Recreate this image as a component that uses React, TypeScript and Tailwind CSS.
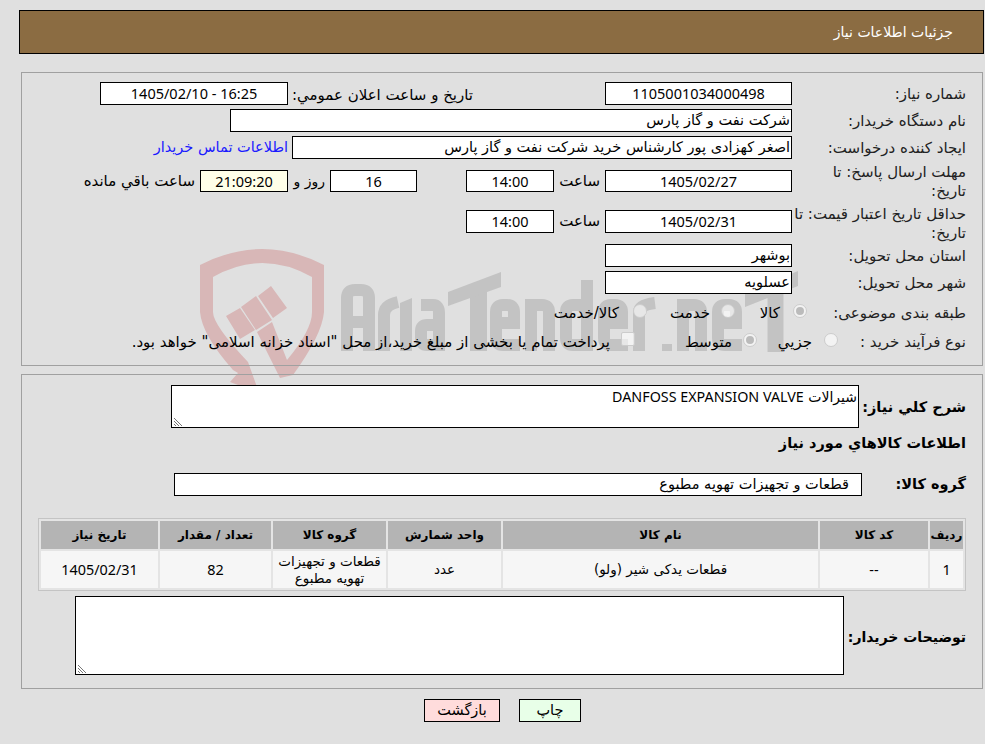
const latin = "font-['Noto_Sans'] text-[14.4px]";

const Box = ({ className = '', children }: { className?: string; children?: React.ReactNode }) => (
    <div className={`h-[23px] shrink-0 border border-black bg-white flex items-center justify-center text-[14.5px] leading-none ${className}`}>{children}</div>
);

const Label = ({ className = '', children }: { className?: string; children: React.ReactNode }) => (
    <div className={`w-[190px] shrink-0 pr-[16px] text-[15px] leading-[19px] text-[#222] ${className}`}>{children}</div>
);

const Radio = ({ checked = false }: { checked?: boolean }) => (
    <span className="w-[14px] h-[14px] mb-[5px] rounded-full border border-[#ccc] bg-white/60 flex items-center justify-center shrink-0">
        {checked && <span className="w-[8px] h-[8px] rounded-full bg-[#bbb]" />}
    </span>
);

function Grip() {
    return (
        <svg className="absolute left-[1px] bottom-[1px]" width="10" height="10" viewBox="0 0 10 10" stroke="#777" strokeWidth="1">
            <path d="M1 2 L9 10 M1 5 L6 10 M1 8 L3 10" />
        </svg>
    );
}

// site watermark, sits behind the form
function Watermark() {
    return (
        <svg className="absolute left-0 top-0" width="985" height="744" viewBox="0 0 985 744">
            <g fill="#d8b7b7">
                <path d="M238 373 L230 382 L257 392 L257 387 L248 362 Q213 325 213 312 V277 Q262 249 312 277 V312 Q312 330 287 360 L272 322 L257 332 L280 378 L293 375 Q322 335 324 312 V265 Q262 233 200 265 V312 Q202 335 233 370 Z" />
                <path d="M226 316 L240 308 L255 330 L240 339 Z M241 307 L256 296 L272 320 L256 330 Z M258 296 L271 286 L287 308 L273 318 Z" />
            </g>
            <g fill="none" stroke="#c3c3c3" strokeWidth="12">
                <path d="M347 351 V298 Q347 290 355 290 H361 Q369 290 369 298 V351 M347 322 H369" />
                <path d="M384 351 V315 Q384 305 398 302" />
                <path d="M406 351 V309" />
                <path d="M421 305 H433 Q439 305 439 313 V345 H427 Q421 345 421 338 V331 Q421 325 427 325 H439" />
                <path d="M478.5 290 V351" strokeWidth="17" />
                <path d="M496 323 H514 V312 Q514 305 507 305 H503 Q496 305 496 312 V338 Q496 345 503 345 H520" />
                <path d="M531 351 V305 H542 Q549 305 549 312 V351" />
                <path d="M587 280 V345 H573 Q566 345 566 338 V312 Q566 305 573 305 H587" />
                <path d="M604 323 H622 V312 Q622 305 615 305 H611 Q604 305 604 312 V338 Q604 345 611 345 H628" />
                <path d="M639 351 V312 Q639 305 655 303" />
                <path d="M683 351 V305 H694 Q701 305 701 312 V351" />
                <path d="M718 323 H736 V312 Q736 305 729 305 H725 Q718 305 718 312 V338 Q718 345 725 345 H742" />
                <path d="M775.5 285 V352" strokeWidth="16" />
            </g>
            <g fill="#c3c3c3">
                <path d="M400 303 L412 298 V309 H400 Z" />
                <path d="M448 292 L501 272 V287 L448 306 Z" />
                <path d="M745 293 L798 271 V286 L745 307 Z" />
                <rect x="662" y="344" width="10" height="7" />
            </g>
        </svg>
    );
}

export default function App() {
    return (
        <div dir="rtl" className="relative w-[985px] h-[744px] overflow-hidden bg-[#e0e0e0] text-black font-['Tahoma','DejaVu_Sans',sans-serif]">
            <Watermark />
            <div className="relative">
                <div className="pt-[10px] pl-[19px] pr-[1px]">
                    <div className="h-[44px] border border-black bg-[#8b6c42] flex items-center pr-[30px] text-white text-[14px]">جزئیات اطلاعات نیاز</div>
                </div>

                <section className="mt-[18px] ml-[21px] mr-[2px] h-[294px] border border-[#a0a0a0] pt-[9px] flex flex-col">
                    <div className="flex h-[27px]">
                        <Label className="pt-[3px]">شماره نیاز:</Label>
                        <Box className={`w-[187px] ${latin}`}>1105001034000498</Box>
                        <div className="w-[317px] pr-[132px] pt-[2px] text-[15px] whitespace-nowrap">تاریخ و ساعت اعلان عمومي:</div>
                        <Box className={`w-[188px] ${latin}`}>16:25 - 1405/02/10</Box>
                    </div>
                    <div className="flex h-[27px]">
                        <Label className="pt-[3px]">نام دستگاه خریدار:</Label>
                        <Box className="w-[562px] !justify-start pr-[1px]">شرکت نفت و گاز پارس</Box>
                    </div>
                    <div className="flex h-[27px]">
                        <Label className="pt-[3px]">ایجاد کننده درخواست:</Label>
                        <Box className="w-[500px] !justify-start pr-[1px]">اصغر کهزادی پور کارشناس خرید شرکت نفت و گاز پارس</Box>
                        <a className="mr-[4px] text-[14.5px] text-[#1a1aff] pt-[1px] whitespace-nowrap">اطلاعات تماس خریدار</a>
                    </div>
                    <div className="flex h-[42px]">
                        <Label>مهلت ارسال پاسخ: تا<br />تاریخ:</Label>
                        <div className="flex items-center h-[22px] mt-[7px] text-[15px]">
                            <Box className={`w-[187px] !h-[22px] ${latin}`}>1405/02/27</Box>
                            <div className="w-[51px] pr-[5px]">ساعت</div>
                            <Box className={`w-[88px] !h-[22px] ${latin}`}>14:00</Box>
                            <Box className={`w-[87px] !h-[22px] mr-[49px] ${latin}`}>16</Box>
                            <div className="w-[42px] pr-[5px] whitespace-nowrap text-[14px]">روز و</div>
                            <Box className={`w-[88px] !h-[22px] !bg-[#ffffe8] ${latin}`}>21:09:20</Box>
                            <div className="mr-[5px] whitespace-nowrap">ساعت باقي مانده</div>
                        </div>
                    </div>
                    <div className="flex h-[39px]">
                        <Label>حداقل تاریخ اعتبار قیمت: تا<br />تاریخ:</Label>
                        <div className="flex items-center h-[23px] mt-[5px] text-[15px]">
                            <Box className={`w-[187px] ${latin}`}>1405/02/31</Box>
                            <div className="w-[51px] pr-[5px]">ساعت</div>
                            <Box className={`w-[88px] ${latin}`}>14:00</Box>
                        </div>
                    </div>
                    <div className="flex h-[27px]">
                        <Label className="pt-[3px]">استان محل تحویل:</Label>
                        <Box className="w-[187px] !justify-start pr-[1px]">بوشهر</Box>
                    </div>
                    <div className="flex h-[27px]">
                        <Label className="pt-[3px]">شهر محل تحویل:</Label>
                        <Box className="w-[187px] !justify-start pr-[1px]">عسلویه</Box>
                    </div>
                    <div className="flex h-[30px] items-center text-[15px]">
                        <Label className="!w-[175px]">طبقه بندی موضوعی:</Label>
                        <Radio checked />
                        <span className="mr-[13px] w-[45px]">کالا</span>
                        <Radio />
                        <span className="mr-[11px] w-[63px]">خدمت</span>
                        <Radio />
                        <span className="mr-[14px] whitespace-nowrap">کالا/خدمت</span>
                    </div>
                    <div className="flex h-[28px] items-center text-[15px]">
                        <Label className="!w-[144px]">نوع فرآیند خرید :</Label>
                        <Radio />
                        <span className="mr-[12px] w-[55px] whitespace-nowrap">جزیي</span>
                        <Radio checked />
                        <span className="mr-[11px] w-[97px]">متوسط</span>
                        <span className="w-[14px] h-[14px] mb-[7px] rounded-[2px] border border-[#ccc] bg-white/60 shrink-0" />
                        <span className="mr-[11px] whitespace-nowrap">پرداخت تمام یا بخشی از مبلغ خرید،از محل "اسناد خزانه اسلامی" خواهد بود.</span>
                    </div>
                </section>

                <section className="mt-[8px] ml-[21px] mr-[2px] h-[315px] border border-[#a0a0a0] pt-[10px] px-[16px] flex flex-col">
                    <div className="flex h-[43px]">
                        <div className="w-[107px] shrink-0 pt-[12px] font-bold text-[14.5px] whitespace-nowrap">شرح کلي نیاز:</div>
                        <div className="relative w-[688px] h-[43px] border border-black bg-white pr-[1px] pt-[2px] text-[14px] leading-[17px]">
                            شیرالات <span className="font-['Noto_Sans'] text-[14.3px]">DANFOSS EXPANSION VALVE</span>
                            <Grip />
                        </div>
                    </div>
                    <div className="h-[30px] font-bold text-[14.5px] leading-[30px]">اطلاعات کالاهاي مورد نیاز</div>
                    <div className="mt-[15px] flex h-[23px]">
                        <div className="w-[104px] shrink-0 pt-[1px] font-bold text-[14.5px]">گروه کالا:</div>
                        <Box className="w-[688px] !justify-start pr-[12px]">قطعات و تجهیزات تهویه مطبوع</Box>
                    </div>
                    <table className="mt-[22px] w-full border-separate border-spacing-[2px] border border-[#c4c4c4] bg-[#e4e4e4] table-fixed text-center text-[13.5px]">
                        <thead>
                            <tr className="h-[28px] bg-[#b4b4b4] font-bold text-[12px]">
                                <th className="w-[33px] p-0">ردیف</th>
                                <th className="w-[108px] p-0">کد کالا</th>
                                <th className="p-0">نام کالا</th>
                                <th className="w-[113px] p-0">واحد شمارش</th>
                                <th className="w-[113px] p-0">گروه کالا</th>
                                <th className="w-[111px] p-0">تعداد / مقدار</th>
                                <th className="w-[117px] p-0">تاریخ نیاز</th>
                            </tr>
                        </thead>
                        <tbody>
                            <tr className="h-[37px] bg-[#f6f6f6]">
                                <td className={`p-0 ${latin}`}>1</td>
                                <td className={`p-0 ${latin}`}>--</td>
                                <td className="p-0">قطعات یدکی شیر (ولو)</td>
                                <td className="p-0">عدد</td>
                                <td className="p-0 leading-[17px]">قطعات و تجهیزات تهویه مطبوع</td>
                                <td className={`p-0 ${latin}`}>82</td>
                                <td className={`p-0 ${latin}`}>1405/02/31</td>
                            </tr>
                        </tbody>
                    </table>
                    <div className="mt-[5px] flex">
                        <div className="w-[122px] shrink-0 pt-[31px] font-bold text-[14px] whitespace-nowrap">توضیحات خریدار:</div>
                        <div className="relative w-[769px] h-[79px] border border-black bg-white"><Grip /></div>
                    </div>
                </section>

                <div className="mt-[10px] flex justify-center gap-[19px] pl-[20px]">
                    <button className="w-[62px] h-[23px] border border-black bg-[#e8ffe8] text-[14.5px] leading-none">چاپ</button>
                    <button className="w-[76px] h-[23px] border border-black bg-[#ffdcdc] text-[14.5px] leading-none">بازگشت</button>
                </div>
            </div>
        </div>
    );
}
